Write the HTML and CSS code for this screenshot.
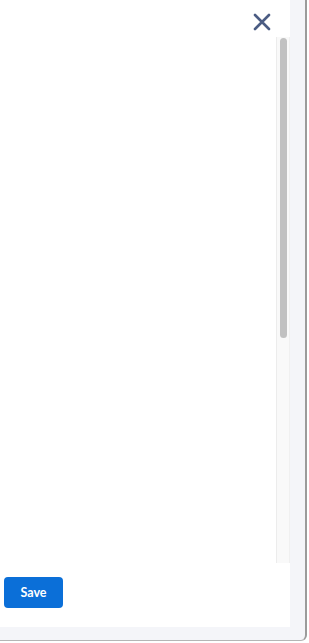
FILE: index.html
```html
<!DOCTYPE html>
<html lang="en">
  <head>
    <meta charset="UTF-8" />
    <meta name="viewport" content="width=device-width, initial-scale=1.0" />
    <title>Edit</title>
    <link rel="stylesheet" href="styles.css">
  </head>
  <body>
    <div class="window">
      <div class="panel">
        <div class="head">
          <button class="closeBtn" title="Close">
            <svg width="18" height="18" viewBox="0 0 18 18">
              <path d="M2 2 L16 16 M16 2 L2 16" stroke="#4b5c83" stroke-width="2.6" stroke-linecap="round" fill="none" />
            </svg>
          </button>
        </div>
        <div class="body">
          <div class="content"></div>
          <div class="track">
            <div class="thumb"></div>
          </div>
        </div>
        <div class="foot">
          <button class="saveBtn">Save</button>
        </div>
      </div>
    </div>
  </body>
</html>
```
FILE: styles.css
```css
* {
  margin: 0;
  padding: 0;
  box-sizing: border-box;
  font-family: Lato, "Open Sans", "Liberation Sans", sans-serif;
}
body {
  background-color: #fff;
  overflow: hidden;
}
.window {
  width: 307px;
  height: 641px;
  background-color: #f4f5f9;
  border-right: 2px solid #9b9b9b;
  border-bottom: 1px solid #b5b5b5;
  border-bottom-right-radius: 6px;
  padding: 0 15px 13px 0;
}
.panel {
  background-color: #fff;
  height: 100%;
  display: flex;
  flex-direction: column;
}
.head {
  height: 37px;
  display: flex;
  justify-content: flex-end;
  align-items: flex-start;
  padding: 13px 19px 0 0;
}
.closeBtn {
  border: none;
  background: none;
  width: 18px;
  height: 18px;
  cursor: pointer;
}
.body {
  flex: 1;
  display: flex;
}
.content {
  flex: 1;
}
.track {
  width: 14px;
  background-color: #f9f9f9;
  border-left: 1px solid #ececec;
  border-right: 1px solid #f0f0f0;
  padding: 1px 2px 0 3px;
}
.thumb {
  height: 300px;
  background-color: #c1c1c1;
  border-radius: 4px;
}
.foot {
  height: 64px;
  padding: 14px 0 0 4px;
}
.saveBtn {
  width: 59px;
  height: 31px;
  background-color: #0b6fd8;
  color: #fff;
  border: none;
  border-radius: 4px;
  font-size: 12.5px;
  font-weight: bold;
  cursor: pointer;
}
```
